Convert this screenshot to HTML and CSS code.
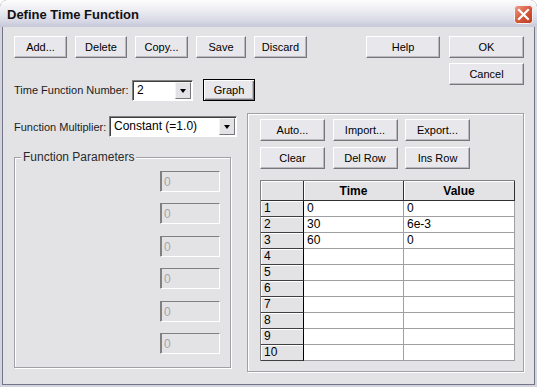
FILE: index.html
```html
<!DOCTYPE html>
<html lang="en">
<head>
  <meta charset="UTF-8" />
  <title>Define Time Function</title>
  <link rel="stylesheet" href="styles.css">
</head>
<body>
  <div class="window">
    <div class="titlebar">
      <span class="title">Define Time Function</span>
      <span class="close">
        <svg width="19" height="19" viewBox="0 0 19 19">
          <defs>
            <linearGradient id="red" x1="0" y1="0" x2="1" y2="1">
              <stop offset="0" stop-color="#f0a08c"/>
              <stop offset="0.5" stop-color="#d8583c"/>
              <stop offset="1" stop-color="#b8381e"/>
            </linearGradient>
          </defs>
          <rect x="0.5" y="0.5" width="18" height="18" rx="3" fill="url(#red)" stroke="#f4f4f4"/>
          <path d="M5 5 L14 14 M14 5 L5 14" stroke="#fff" stroke-width="2.2" stroke-linecap="square"/>
        </svg>
      </span>
    </div>

    <div class="client">
      <div class="top">
        <div class="top-left">
          <div class="btn-row">
            <button class="btn w53">Add...</button>
            <button class="btn w52">Delete</button>
            <button class="btn w53">Copy...</button>
            <button class="btn w50">Save</button>
            <button class="btn w53">Discard</button>
          </div>
          <div class="field-row tfn-row">
            <span class="label tfn-label">Time Function Number:</span>
            <div class="combo tfn-combo">
              <span class="combo-text">2</span>
              <span class="combo-arrow"><i></i></span>
            </div>
            <button class="btn btn-default w52">Graph</button>
          </div>
        </div>
        <div class="top-right">
          <button class="btn w74">Help</button>
          <div class="ok-col">
            <button class="btn w75">OK</button>
            <button class="btn w75">Cancel</button>
          </div>
        </div>
      </div>

      <div class="main">
        <div class="main-left">
          <div class="field-row fm-row">
            <span class="label fm-label">Function Multiplier:</span>
            <div class="combo fm-combo">
              <span class="combo-text">Constant (=1.0)</span>
              <span class="combo-arrow"><i></i></span>
            </div>
          </div>
          <fieldset class="group">
            <legend>Function Parameters</legend>
            <div class="param">0</div>
            <div class="param">0</div>
            <div class="param">0</div>
            <div class="param">0</div>
            <div class="param">0</div>
            <div class="param">0</div>
          </fieldset>
        </div>

        <div class="panel">
          <div class="panel-btns">
            <button class="btn">Auto...</button>
            <button class="btn">Import...</button>
            <button class="btn">Export...</button>
            <button class="btn">Clear</button>
            <button class="btn">Del Row</button>
            <button class="btn">Ins Row</button>
          </div>
          <table class="grid">
            <colgroup>
              <col class="c-rh"><col class="c-time"><col class="c-value">
            </colgroup>
            <tr><th></th><th>Time</th><th>Value</th></tr>
            <tr><td class="rh">1</td><td>0</td><td>0</td></tr>
            <tr><td class="rh">2</td><td>30</td><td>6e-3</td></tr>
            <tr><td class="rh">3</td><td>60</td><td>0</td></tr>
            <tr><td class="rh">4</td><td></td><td></td></tr>
            <tr><td class="rh">5</td><td></td><td></td></tr>
            <tr><td class="rh">6</td><td></td><td></td></tr>
            <tr><td class="rh">7</td><td></td><td></td></tr>
            <tr><td class="rh">8</td><td></td><td></td></tr>
            <tr><td class="rh">9</td><td></td><td></td></tr>
            <tr><td class="rh">10</td><td></td><td></td></tr>
          </table>
        </div>
      </div>
    </div>
  </div>
</body>
</html>
```

FILE: styles.css
```css
body {
  margin: 0;
  font-family: 'Liberation Sans', Arial, sans-serif;
  font-size: 11px;
  color: #000;
  background: #fff;
}

.window {
  width: 537px;
  height: 387px;
  box-sizing: border-box;
  background: #e3e3e6;
  border-radius: 7px 7px 0 0;
  box-shadow: inset 0 0 0 2px #d4d4dc, inset 0 0 0 3px #74748a;
  overflow: hidden;
}

.titlebar {
  height: 27px;
  display: flex;
  align-items: center;
  justify-content: space-between;
  padding: 0 4px 0 7px;
  background: linear-gradient(#fdfdfd, #eeeef3 35%, #d6d7e4 80%, #c6c7d8);
  border-radius: 7px 7px 0 0;
}

.title {
  font-size: 13px;
  font-weight: bold;
  color: #111;
  padding-top: 1px;
}

.close {
  display: flex;
  margin-top: 1px;
}

.client {
  padding: 9px 13px 0 14px;
}

/* buttons */

.btn {
  box-sizing: border-box;
  height: 22px;
  padding: 0;
  font: inherit;
  color: #000;
  background: #e8e8ec;
  border: 1px solid;
  border-color: #fff #76767c #76767c #fff;
  box-shadow: inset -1px -1px #b9b9be;
}

.btn-default {
  border-color: #000;
  box-shadow: inset 1px 1px #fff, inset -1px -1px #76767c, inset -2px -2px #b9b9be;
}

.w50 { width: 50px; }
.w52 { width: 52px; }
.w53 { width: 53px; }
.w74 { width: 74px; }
.w75 { width: 75px; }

.top {
  display: flex;
}

.btn-row {
  display: flex;
  gap: 8px;
}

.top-right {
  margin-left: auto;
  display: flex;
  align-items: flex-start;
  gap: 9px;
}

.ok-col {
  display: flex;
  flex-direction: column;
  gap: 5px;
}

/* fields */

.field-row {
  display: flex;
  align-items: center;
}

.tfn-row {
  margin-top: 21px;
}

.label {
  color: #1c1c1c;
  white-space: nowrap;
  flex-shrink: 0;
}

.tfn-label { width: 118px; }
.fm-label { width: 95px; }

.combo {
  box-sizing: border-box;
  height: 21px;
  display: flex;
  background: #fff;
  border: 1px solid;
  border-color: #808080 #fff #fff #808080;
  box-shadow: inset 1px 1px #404040;
}

.tfn-combo {
  width: 61px;
  margin-right: 10px;
}

.fm-combo {
  width: 128px;
}

.combo-text {
  flex: 1;
  padding: 2px 0 0 4px;
  font-size: 12px;
}

.combo-arrow {
  box-sizing: border-box;
  width: 16px;
  margin: 1px 1px 1px 0;
  display: flex;
  align-items: center;
  justify-content: center;
  background: #e3e3e6;
  border: 1px solid;
  border-color: #f4f4f4 #76767c #76767c #f4f4f4;
}

.combo-arrow i {
  width: 0;
  height: 0;
  border-left: 3.5px solid transparent;
  border-right: 3.5px solid transparent;
  border-top: 4px solid #000;
  margin-top: 1px;
}

/* lower part */

.main {
  display: flex;
  margin-top: 12px;
}

.main-left {
  width: 223px;
  margin-right: 10px;
}

.fm-row {
  margin-top: 3px;
}

.group {
  width: 217px;
  box-sizing: border-box;
  margin: 14px 0 0 0;
  padding: 7px 10px 13px 0;
  border: 1px solid #a0a0a6;
  box-shadow: inset 1px 1px #fff, 1px 1px #fff;
  display: flex;
  flex-direction: column;
  align-items: flex-end;
  gap: 11.4px;
}

.group legend {
  margin-left: 6px;
  padding: 0 2px;
  background: #e3e3e6;
  color: #2a2a2a;
  font-size: 12px;
  line-height: 13px;
}

.param {
  box-sizing: border-box;
  width: 60px;
  height: 21px;
  padding: 3px 0 0 3px;
  color: #a4a4a8;
  font-size: 12px;
  border: 1px solid;
  border-color: #808080 #fff #fff #808080;
  box-shadow: inset 1px 0 #808080;
}

.panel {
  box-sizing: border-box;
  width: 277px;
  height: 259px;
  padding: 5px 0 0 12px;
  border: 1px solid #a0a0a6;
  box-shadow: inset 1px 1px #fff, 1px 1px #fff;
}

.panel-btns {
  display: grid;
  grid-template-columns: 65px 65px 65px;
  column-gap: 7.5px;
  row-gap: 6px;
}

.grid {
  margin-top: 11px;
  width: 255px;
  table-layout: fixed;
  border-collapse: separate;
  border-spacing: 0;
  border-top: 1px solid #808080;
  border-left: 1px solid #808080;
}

.c-rh { width: 43px; }
.c-time { width: 100px; }

.grid th {
  height: 19px;
  padding: 0;
  background: #e3e3e6;
  font-size: 12px;
  font-weight: bold;
  border-right: 1px solid #303030;
  border-bottom: 1px solid #303030;
  box-shadow: inset 1px 1px #fff;
}

.grid td {
  height: 15px;
  padding: 0 0 0 3px;
  font-size: 12px;
  line-height: 15px;
  background: #fff;
  border-right: 1px solid #a0a0a4;
  border-bottom: 1px solid #a0a0a4;
}

.grid td.rh {
  background: #e3e3e6;
  border-right: 1px solid #000;
  border-bottom: 1px solid #404040;
  box-shadow: inset 1px 1px #fff;
}
```
